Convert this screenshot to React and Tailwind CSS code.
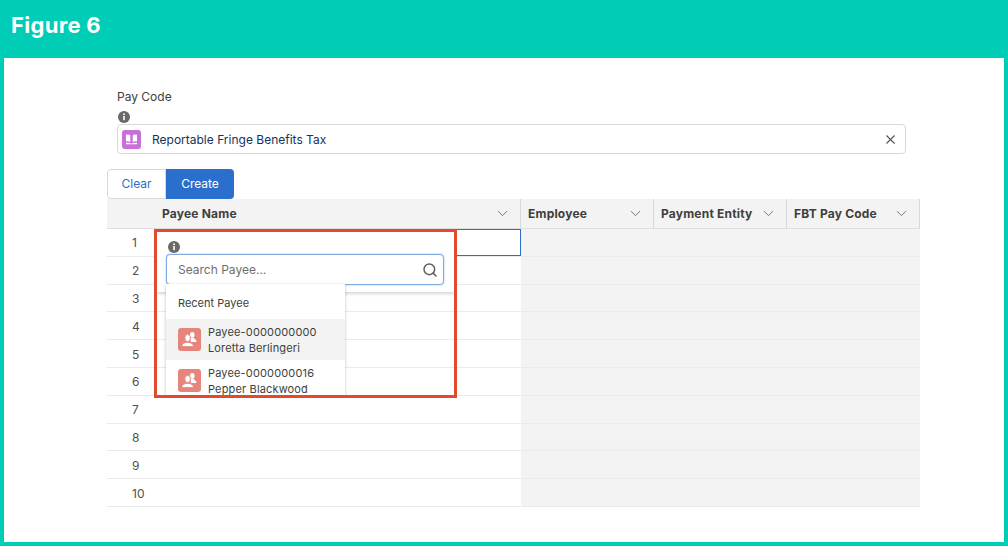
import React from 'react';
import { ChevronDown, Search, X } from 'lucide-react';

const sf = "font-['Inter','Liberation_Sans',sans-serif]";

const InfoDot = () => (
  <svg width="12" height="12" viewBox="0 0 12 12" className="block">
    <circle cx="6" cy="6" r="6" fill="#6b6967" />
    <rect x="5.200" y="5" width="1.600" height="4.200" fill="#fff" />
    <circle cx="6" cy="3.300" r="0.950" fill="#fff" />
  </svg>
);

const PayeeIcon = () => (
  <div className="w-[23px] h-[23px] rounded-[3px] bg-[#e5857b] flex items-center justify-center shrink-0">
    <svg width="17" height="17" viewBox="0 0 17 17" fill="#fff">
      <ellipse cx="11.300" cy="3.800" rx="2.300" ry="2.900" />
      <path d="M9.500 6.800h3.600l.4 1.100c1.200.5 2 1.200 2 3.100H10z" />
      <g stroke="#e5857b" strokeWidth="0.800">
        <ellipse cx="6.600" cy="7" rx="2.800" ry="3.500" />
        <path d="M1 15.500v-1.300c0-1.300 2-2 3.600-2.700h4c1.600.7 3.600 1.400 3.600 2.700v1.300z" />
      </g>
    </svg>
  </div>
);

const Header = ({ label }) => (
  <div className="flex items-center justify-between pl-[7px] pr-[9px] border-r border-[#d8d8d8]">
    <span className="text-[12px] font-bold text-[#3e3e3c] tracking-[0.2px]">{label}</span>
    <ChevronDown size={17} strokeWidth={1.3} className="text-[#706e6b]" />
  </div>
);

const rows = [1, 2, 3, 4, 5, 6, 7, 8, 9, 10];

export default function App() {
  return (
    <div className={`w-[1008px] h-[546px] bg-[#00cdb6] flex flex-col overflow-hidden ${sf}`}>
      <div className="h-[58px] shrink-0 pl-[11px] pt-[10px]">
        <h1 className="text-[22px] leading-[30px] font-bold tracking-[0.3px] text-white">Figure 6</h1>
      </div>
      <div className="mx-[4px] h-[484px] bg-white pl-[103px] pr-[84px] pt-[32px]">
        <div className="pl-[10px] pr-[14px]">
          <div className="text-[12px] leading-[14px] text-[#3e3e3c]">Pay Code</div>
          <div className="mt-[7px] pl-px"><InfoDot /></div>
          <div className="mt-[1px] h-[30px] border border-[#d9d9d9] rounded-[4px] flex items-center pl-[4px] pr-[7px]">
            <div className="w-[19px] h-[19px] rounded-[3px] bg-[#c86fd8] flex items-center justify-center">
              <svg width="13" height="13" viewBox="0 0 13 13" fill="#fff">
                <path d="M1 1.800c1.500-.4 3-.3 4.300.4v6.800c-1.300-.7-2.800-.8-4.300-.4zM12 1.800c-1.500-.4-3-.3-4.300.4v6.800c1.300-.7 2.800-.8 4.300-.4z" />
                <path d="M1 9.800c1.900-.3 3.800-.2 5.500.6 1.700-.8 3.600-.9 5.500-.6v1.400H1z" />
              </svg>
            </div>
            <span className="ml-[11px] pt-[2px] text-[12px] text-[#16325c]">Reportable Fringe Benefits Tax</span>
            <X size={15} strokeWidth={1.7} className="ml-auto text-[#54524f]" />
          </div>
        </div>

        <div className="mt-[15px] flex h-[30px]">
          <button className="w-[59px] border border-[#d9d9d9] rounded-l-[4px] text-[12px] text-[#2d6fc4]">Clear</button>
          <button className="w-[68px] bg-[#2b6fce] rounded-r-[4px] text-[12px] text-white">Create</button>
        </div>

        <div className="relative w-[813px]">
          <div className="grid grid-cols-[48px_366px_133px_133px_133px] h-[30px] bg-[#f3f3f3] border-b border-[#dedede]">
            <div />
            <Header label="Payee Name" />
            <Header label="Employee" />
            <Header label="Payment Entity" />
            <Header label="FBT Pay Code" />
          </div>
          {rows.map((n) => (
            <div key={n} className="grid grid-cols-[48px_366px_399px] h-[27.8px] border-b border-[#ebebeb]">
              <div className="pl-[25px] pt-[2px] flex items-center text-[12px] text-[#514f4d]">{n}</div>
              <div className={n === 1 ? 'border border-[#2b6fce]' : ''} />
              <div className="bg-[#f3f3f3]" />
            </div>
          ))}

          {/* popup sitting over the table */}
          <div className="absolute left-[47px] top-[30px] w-[303px] h-[169px] border-[3px] border-[#e2492d] overflow-hidden">
            <div className="bg-white h-[60px] shadow-[0_2px_3px_rgba(0,0,0,0.16)] pl-[9px] pr-[10px] pt-[9px]">
              <div className="pl-[2px]"><InfoDot /></div>
              <div className="mt-[1px] h-[31px] border border-[#7fa8e0] rounded-[4px] flex items-center justify-between pl-[11px] pr-[5px] bg-white shadow-[0_0_2px_#9dc0ee]">
                <span className="text-[12px] text-[#706e6b]">Search Payee...</span>
                <Search size={16} strokeWidth={2.2} className="text-[#5f5d5b]" />
              </div>
            </div>
            <div className="relative -mt-[8px] ml-[9px] w-[179px] bg-white shadow-[0_1px_3px_rgba(0,0,0,0.25)]">
              <div className="h-[35px] pl-[12px] pt-[3px] flex items-center text-[11px] text-[#3e3e3c]">Recent Payee</div>
              <div className="h-[41px] bg-[#f3f3f3] pl-[12px] flex items-center gap-[7px]">
                <PayeeIcon />
                <div className="pt-[2px] text-[11px] leading-[15.500px] tracking-[0.15px] text-[#3e3e3c]">
                  <div>Payee-0000000000</div>
                  <div>Loretta Berlingeri</div>
                </div>
              </div>
              <div className="h-[41px] pl-[12px] flex items-center gap-[7px]">
                <PayeeIcon />
                <div className="pt-[2px] text-[11px] leading-[15.500px] tracking-[0.15px] text-[#3e3e3c]">
                  <div>Payee-0000000016</div>
                  <div>Pepper Blackwood</div>
                </div>
              </div>
            </div>
          </div>
        </div>
      </div>
    </div>
  );
}
